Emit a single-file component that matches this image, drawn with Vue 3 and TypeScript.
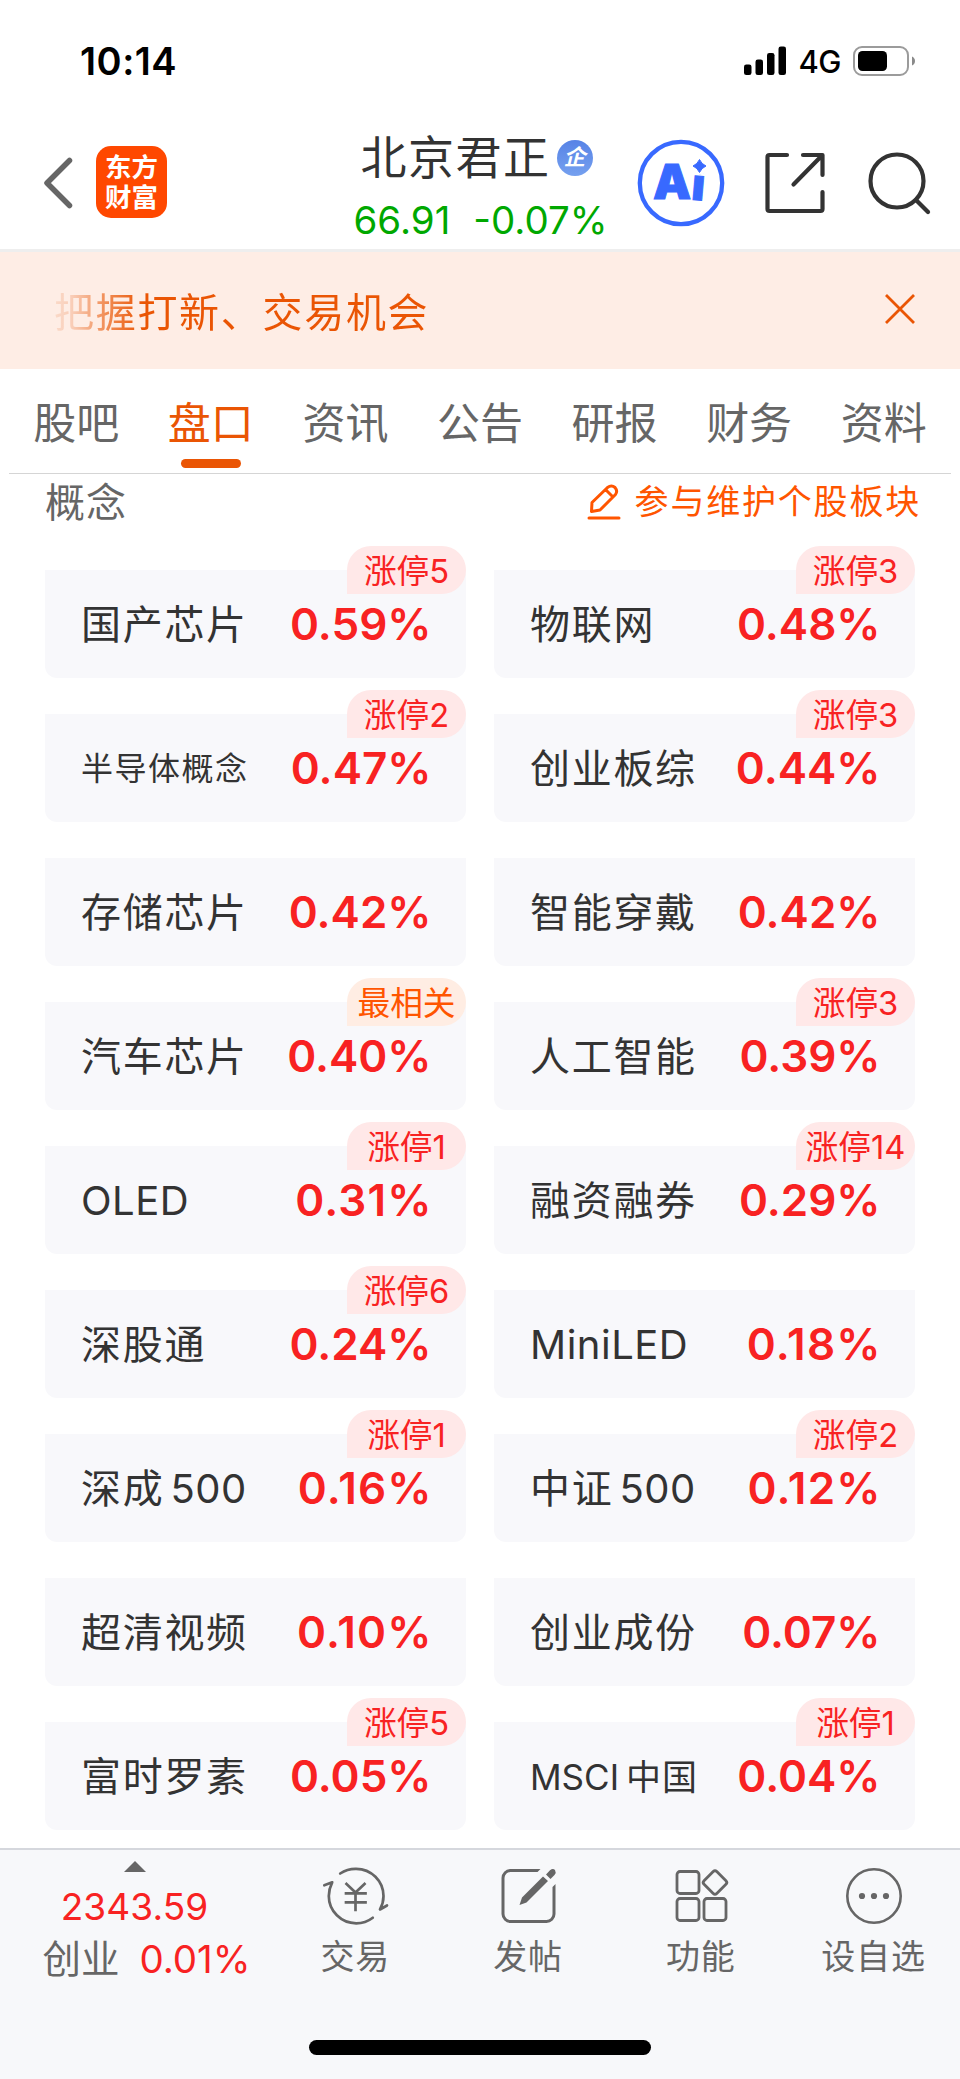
<script setup lang="ts">
interface Concept {
  name: string
  change: string
  tag?: string
  related?: boolean
  size?: 'small' | 'medium'
}

const tabs: string[] = ['股吧', '盘口', '资讯', '公告', '研报', '财务', '资料']
const activeTab = '盘口'

const concepts: Concept[] = [
  { name: '国产芯片', change: '0.59%', tag: '涨停5' },
  { name: '物联网', change: '0.48%', tag: '涨停3' },
  { name: '半导体概念', change: '0.47%', tag: '涨停2', size: 'small' },
  { name: '创业板综', change: '0.44%', tag: '涨停3' },
  { name: '存储芯片', change: '0.42%' },
  { name: '智能穿戴', change: '0.42%' },
  { name: '汽车芯片', change: '0.40%', tag: '最相关', related: true },
  { name: '人工智能', change: '0.39%', tag: '涨停3' },
  { name: 'OLED', change: '0.31%', tag: '涨停1' },
  { name: '融资融券', change: '0.29%', tag: '涨停14' },
  { name: '深股通', change: '0.24%', tag: '涨停6' },
  { name: 'MiniLED', change: '0.18%' },
  { name: '深成500', change: '0.16%', tag: '涨停1' },
  { name: '中证500', change: '0.12%', tag: '涨停2' },
  { name: '超清视频', change: '0.10%' },
  { name: '创业成份', change: '0.07%' },
  { name: '富时罗素', change: '0.05%', tag: '涨停5' },
  { name: 'MSCI中国', change: '0.04%', tag: '涨停1', size: 'medium' },
]

// Splits a name into Latin and Chinese runs so a thin gap can sit between them.
const runs = (name: string): string[] => name.match(/[A-Za-z0-9]+|[^A-Za-z0-9]+/g) ?? []
const isLatin = (run: string): boolean => /^[A-Za-z0-9]/.test(run)
</script>

<template>
  <div class="screen">
    <div class="status">
      <span class="clock">10:14</span>
      <div class="signals">
        <svg class="bars" width="42" height="30" viewBox="0 0 42 30">
          <rect x="0" y="18.5" width="7.5" height="10.5" rx="2.3" />
          <rect x="11.5" y="13.5" width="7.5" height="15.5" rx="2.3" />
          <rect x="23" y="7" width="7.5" height="22" rx="2.3" />
          <rect x="34.5" y="0.5" width="7.5" height="28.5" rx="2.3" />
        </svg>
        <span class="network">4G</span>
        <svg width="63" height="30" viewBox="0 0 63 30">
          <rect x="1" y="1" width="54" height="28" rx="8" fill="none" stroke="#9b9b9b" stroke-width="2" />
          <rect x="5" y="5" width="29" height="20" rx="4.5" />
          <path d="M59 10.5q3 1.500 3 4.500t-3 4.500z" fill="#8a8a8a" />
        </svg>
      </div>
    </div>

    <header class="header">
      <svg class="back" width="32" height="56" viewBox="0 0 32 56">
        <path d="M27.500 5.500L5 28L27.500 50.500" fill="none" stroke="#666" stroke-width="5.500" stroke-linecap="round" stroke-linejoin="round" />
      </svg>
      <div class="logo"><span>东方</span><span>财富</span></div>
      <div class="stock">
        <div class="stock-name">
          <span>北京君正</span>
          <i class="corp">企</i>
        </div>
        <div class="quote"><span>66.91</span><span>-0.07%</span></div>
      </div>
      <div class="tools">
        <svg width="88" height="88" viewBox="637 139 88 88">
          <circle cx="681" cy="183" r="41.200" fill="none" stroke="#3869ff" stroke-width="4.300" />
          <g class="ai" fill="#3869ff" stroke="#3869ff">
            <text x="653" y="198.500" font-size="48">A</text>
            <text x="691.500" y="200" font-size="44" transform="rotate(5 697 190)">i</text>
            <circle cx="699.500" cy="165" r="9.500" fill="#fff" stroke="none" />
            <path d="M699.500 159.500q2 4.500 6.500 6.500q-4.500 2-6.500 6.500q-2-4.500-6.500-6.500q4.500-2 6.500-6.500z" stroke-linejoin="round" />
          </g>
        </svg>
        <svg width="62" height="62" viewBox="764 152 62 62" class="line">
          <path d="M787 155H769.500a2 2 0 0 0-2 2V209a2 2 0 0 0 2 2H820.500a2 2 0 0 0 2-2V192M803 155H822.500V175M821 156.500L793.500 184.500" />
        </svg>
        <svg width="64" height="64" viewBox="867 150 64 64" class="line">
          <circle cx="897" cy="180" r="26.500" />
          <path d="M916 199L928 211" />
        </svg>
      </div>
    </header>

    <div class="notice">
      <span class="notice-text">把握打新、交易机会</span>
      <svg width="32" height="32" viewBox="0 0 32 32">
        <path d="M2 2L30 30M30 2L2 30" stroke="#ea5504" stroke-width="2.800" />
      </svg>
    </div>

    <nav class="tabs">
      <div v-for="tab in tabs" :key="tab" class="tab" :class="{ active: tab === activeTab }">{{ tab }}</div>
    </nav>

    <div class="section">
      <h2>概念</h2>
      <a class="maintain">
        <svg width="34" height="36" viewBox="0 0 34 36">
          <path d="M2 34H32M4.500 27.500L5 18.500L20.500 3.500Q24.500 0.500 28 3.500Q31 7 28.500 10.500L13 26L4.500 27.500M19 6L26 13" fill="none" stroke="#ff5500" stroke-width="3" stroke-linecap="round" stroke-linejoin="round" />
        </svg>
        <span>参与维护个股板块</span>
      </a>
    </div>

    <main class="grid">
      <div v-for="item in concepts" :key="item.name" class="card">
        <span class="name" :class="item.size"><span v-for="run in runs(item.name)" :key="run" :class="{ latin: isLatin(run) }">{{ run }}</span></span>
        <span class="change" :class="{ loose: item.change.includes('1') }">{{ item.change }}</span>
        <span v-if="item.tag" class="tag" :class="{ related: item.related }">{{ item.tag }}</span>
      </div>
    </main>

    <footer class="footer">
      <div class="index">
        <svg width="22" height="11" viewBox="0 0 22 11"><path d="M11 0L22 11H0z" fill="#666" /></svg>
        <div class="index-value">2343.59</div>
        <div class="index-row"><span class="index-name">创业</span><span>0.01%</span></div>
      </div>
      <div class="action">
        <svg width="68" height="60" viewBox="321.500 1866 68 60">
          <g fill="none" stroke="#666" stroke-width="2.700" stroke-linecap="round" stroke-linejoin="round">
            <path d="M340.700 1873.500A27.400 27.400 0 0 1 356.700 1868.800A27.400 27.400 0 0 1 384 1896Q384 1903 380.500 1909.500L387.500 1905.500" />
            <path d="M373.300 1917.700A27.400 27.400 0 0 1 356.700 1923.300A27.400 27.400 0 0 1 329.300 1896Q329.300 1889 332.700 1882.300L324.800 1885.300" />
            <path d="M347 1884L356 1892.500L365 1884M346.500 1893.300H366M346.500 1902.300H366M356 1893V1910" stroke-linecap="square" />
          </g>
        </svg>
        <span>交易</span>
      </div>
      <div class="action">
        <svg width="60" height="60" viewBox="498.500 1866 60 60">
          <path d="M541 1869H511a9 9 0 0 0-9 9V1914a9 9 0 0 0 9 9H547a9 9 0 0 0 9-9V1884L553 1887V1914a6 6 0 0 1-6 6H511a6 6 0 0 1-6-6V1878a6 6 0 0 1 6-6H538z" fill="#666" />
          <path d="M520 1905L522.500 1897.500L543.500 1876.500L548.500 1881L527 1902.500zM546.500 1874.500L550.500 1870.200Q553.500 1868 555.500 1870Q557 1872.500 555 1875L551 1879z" fill="#666" />
        </svg>
        <span>发帖</span>
      </div>
      <div class="action">
        <svg width="60" height="60" viewBox="671 1866 60 60">
          <g fill="none" stroke="#666" stroke-width="2.800">
            <rect x="677" y="1871.500" width="22" height="22" rx="3" />
            <rect x="677" y="1898.500" width="22" height="22" rx="3" />
            <rect x="704" y="1898.500" width="22" height="22" rx="3" />
            <rect x="706" y="1873.500" width="18" height="18" rx="2.500" transform="rotate(45 715 1882.500)" />
          </g>
        </svg>
        <span>功能</span>
      </div>
      <div class="action">
        <svg width="60" height="60" viewBox="844 1866 60 60">
          <circle cx="874" cy="1896" r="26.700" fill="none" stroke="#666" stroke-width="2.600" />
          <g fill="#666"><circle cx="862" cy="1896" r="3.100" /><circle cx="874" cy="1896" r="3.100" /><circle cx="886" cy="1896" r="3.100" /></g>
        </svg>
        <span>设自选</span>
      </div>
      <div class="home-bar"></div>
    </footer>
  </div>
</template>

<style>
body { margin: 0; background: #fff; }
</style>

<style scoped>
.screen {
  width: 960px;
  height: 2079px;
  display: flex;
  flex-direction: column;
  overflow: hidden;
  background: #fff;
  font-family: Inter, "Noto Sans CJK SC", sans-serif;
  color: #333;
}
.screen svg { display: block; flex: none; }
.status {
  height: 122px;
  box-sizing: border-box;
  padding: 0 44px 0 80px;
  display: flex;
  justify-content: space-between;
  align-items: center;
  color: #000;
}
.clock { font-size: 38px; font-weight: 600; line-height: 40px; letter-spacing: 0.500px; }
.signals { display: flex; align-items: center; }
.network { margin: 2px 12px 0 12px; font-size: 31px; font-weight: 500; line-height: 32px; letter-spacing: -0.500px; }

.header {
  height: 127px;
  border-bottom: 3px solid #eee;
  display: grid;
  grid-template-columns: 42px 54px 72px 1fr 322px;
  align-items: start;
}
.back { grid-column: 2; margin-top: 33px; }
.logo {
  width: 71px;
  height: 72px;
  margin-top: 24px;
  border-radius: 15px;
  background: #ff4800;
  color: #fff;
  display: flex;
  flex-direction: column;
  align-items: center;
  justify-content: center;
  font-size: 26.500px;
  font-weight: 700;
  line-height: 30px;
}
.stock { padding-left: 185.500px; white-space: nowrap; }
.stock-name { display: flex; align-items: center; height: 60px; margin: 5px 0 0 7px; font-size: 46px; line-height: 60px; letter-spacing: 1.500px; }
.corp {
  width: 36px;
  height: 36px;
  margin: 2px 0 0 6px;
  border-radius: 50%;
  background: linear-gradient(#5783e6, #75a0ef);
  color: #fff;
  font-size: 22px;
  font-weight: 700;
  line-height: 35px;
  letter-spacing: 0;
  text-align: center;
}
.quote { display: flex; gap: 23px; margin-top: 13px; color: #00a800; font-size: 38.500px; line-height: 40px; }
.tools { display: flex; align-items: center; gap: 39px; height: 88px; margin-top: 17px; margin-left: -1px; }
.tools svg:last-child { margin-left: 2px; }
.ai { font-family: Inter, sans-serif; font-weight: 900; stroke-width: 1px; }
.line { fill: none; stroke: #333; stroke-width: 4.200px; stroke-linecap: round; stroke-linejoin: round; }

.notice {
  height: 117px;
  box-sizing: border-box;
  padding: 0 44px 0 54px;
  display: flex;
  justify-content: space-between;
  align-items: center;
  background: #feede5;
}
.notice svg { margin-bottom: 3px; }
.notice-text {
  margin-top: 5px;
  font-size: 40px;
  line-height: 60px;
  letter-spacing: 1.700px;
  color: transparent;
  background: linear-gradient(90deg, #fadac9 0, #f9cdb7 18px, #f1905a 50px, #ea5504 90px);
  background-clip: text;
}

.tabs {
  height: 104px;
  margin: 0 9px;
  display: grid;
  grid-template-columns: repeat(7, 1fr);
  border-bottom: 1px solid #d5d5d5;
}
.tab {
  display: flex;
  flex-direction: column;
  align-items: center;
  padding-top: 23px;
  font-size: 43px;
  line-height: 62px;
  color: #666;
}
.tab.active { color: #ea5504; }
.tab.active::after { content: ""; width: 60px; height: 9px; margin-top: 5px; border-radius: 5px; background: #ea5504; }

.section { height: 96px; padding: 0 39px 0 45px; display: flex; justify-content: space-between; align-items: flex-start; }
.section h2 { margin: 0; font-size: 40px; font-weight: 400; line-height: 57px; letter-spacing: 1px; color: #666; }
.maintain { display: flex; align-items: center; gap: 14px; height: 55px; color: #ff5500; font-size: 34px; line-height: 56px; letter-spacing: 1.800px; }

.grid { display: grid; grid-template-columns: 421px 421px; gap: 36px 28px; padding-left: 45px; }
.card {
  position: relative;
  height: 108px;
  box-sizing: border-box;
  padding: 0 34.500px 0 36px;
  display: flex;
  align-items: center;
  justify-content: space-between;
  background: #f8f8fb;
  border-radius: 0 0 12px 12px;
}
.name { font-size: 40px; line-height: 60px; letter-spacing: 1.700px; padding-top: 1px; }
.name.small { font-size: 32px; letter-spacing: 1.500px; }
.name.medium { font-size: 35px; letter-spacing: 1px; }
.latin { letter-spacing: 0.500px; }
.latin:not(:first-child) { margin-left: 6px; }
.latin:not(:last-child) { margin-right: 7px; letter-spacing: 0; }
.change { color: #f82222; font-size: 44px; font-weight: 600; line-height: 60px; }
.change.loose { letter-spacing: 1.200px; margin-right: -1.200px; }
.tag {
  position: absolute;
  right: 0;
  top: -24px;
  width: 119px;
  height: 48px;
  border-radius: 24px 24px 24px 0;
  background: #ffe8e8;
  color: #f82222;
  font-size: 32.700px;
  font-weight: 370;
  line-height: 50px;
  text-align: center;
}
.tag.related { background: #ffede3; color: #ff5500; }

.footer {
  position: relative;
  height: 229px;
  margin-top: auto;
  display: grid;
  grid-template-columns: 269px repeat(4, 1fr);
  border-top: 2px solid #d5d7dd;
  background: #f7f8fa;
  color: #666;
}
.index { display: flex; flex-direction: column; align-items: center; padding-top: 11px; color: #f82222; }
.index-value { margin-top: 15px; font-size: 37px; line-height: 40px; letter-spacing: 0.100px; }
.index-row { display: flex; gap: 20px; margin: 12px 0 0 24px; font-size: 38.500px; line-height: 40px; }
.index-name { color: #666; }
.action { display: flex; flex-direction: column; align-items: center; padding-top: 16px; font-size: 34px; line-height: 50px; letter-spacing: 1px; }
.action span { margin-top: 6px; }
.home-bar { position: absolute; left: 309px; top: 190px; width: 342px; height: 15px; border-radius: 8px; background: #000; }
</style>
